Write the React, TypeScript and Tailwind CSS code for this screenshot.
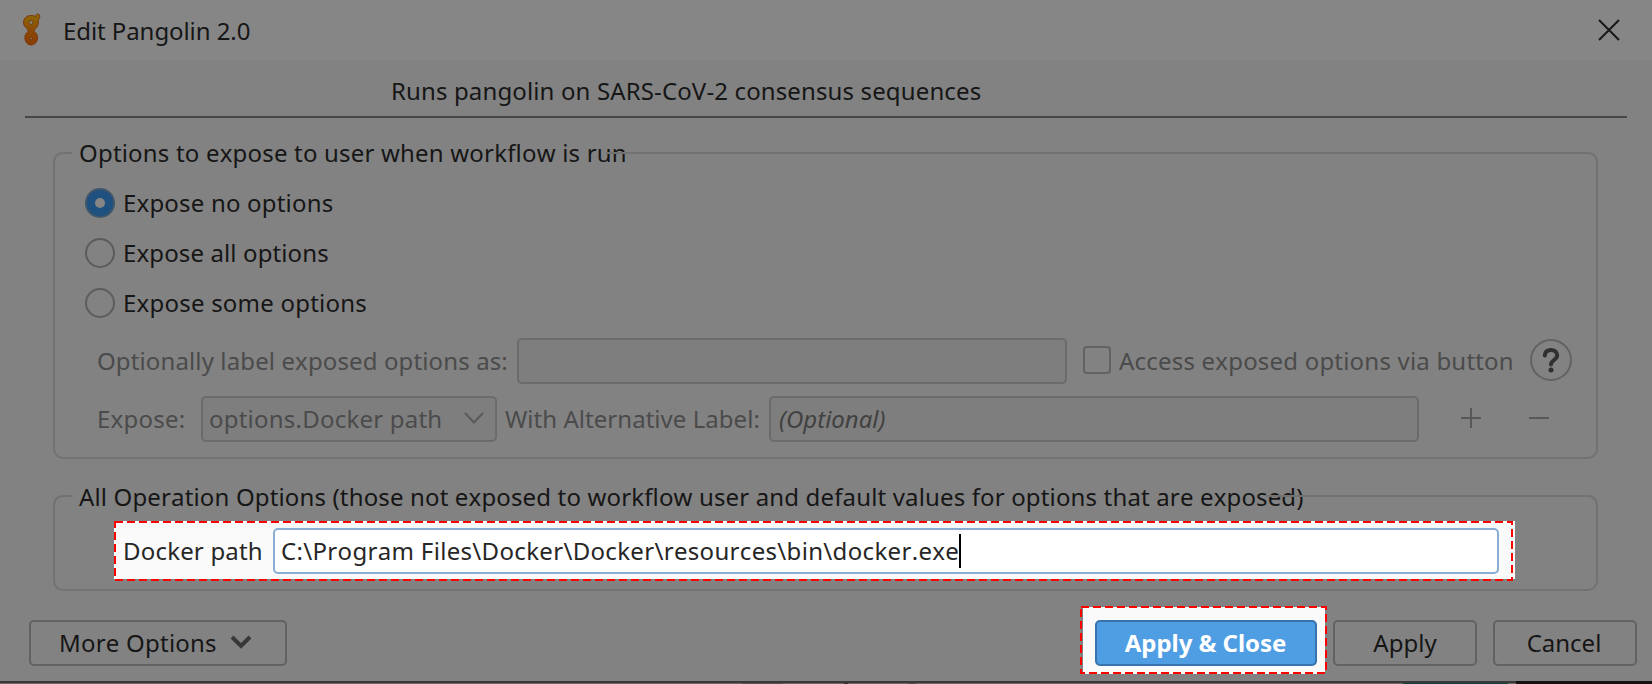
import type { ReactNode } from "react";

const fieldBase = "box-border flex h-[46px] shrink-0 items-center rounded-[5px] border-2";

function Radio({ label, checked, tracking }: { label: string; checked?: boolean; tracking: string }) {
  return (
    <label className="flex h-[50px] items-center gap-2">
      <span
        className={
          checked
            ? "flex size-[30px] items-center justify-center rounded-full border-2 border-[#3f556a] bg-[#1f5180]"
            : "flex size-[30px] items-center justify-center rounded-full border-2 border-[#5c5c5c]"
        }
      >
        {checked && <span className="size-[10px] rounded-full bg-[#868686]" />}
      </span>
      <span className={`whitespace-nowrap ${tracking}`}>{label}</span>
    </label>
  );
}

function Group({ title, className, titleClass, line, children }: { title: string; className: string; titleClass: string; line: string; children: ReactNode }) {
  return (
    <section className={`relative ml-[53px] w-[1545px] rounded-[10px] border-2 border-t-0 border-[#727272] ${className}`}>
      <span className="absolute -left-[2px] top-0 h-[12px] w-[19px] rounded-tl-[10px] border-l-2 border-t-2 border-[#727272]" />
      <h2 className={`absolute left-[24px] whitespace-nowrap leading-9 ${titleClass}`}>{title}</h2>
      <span className={`absolute -right-[2px] top-0 h-[12px] rounded-tr-[10px] border-r-2 border-t-2 border-[#727272] ${line}`} />
      {children}
    </section>
  );
}

function Dashes({ w, h, className }: { w: number; h: number; className: string }) {
  return (
    <svg className={`pointer-events-none absolute ${className}`} width={w} height={h} fill="none" stroke="#ff0000" strokeWidth="2" strokeDasharray="8 4">
      <rect x="1" y="1" width={w - 2} height={h - 2} />
    </svg>
  );
}

export default function App() {
  return (
    <main className="flex h-[684px] w-[1652px] flex-col overflow-hidden bg-[#828282] font-['Noto_Sans',sans-serif] text-[24px] leading-9 text-[#161616] [font-kerning:none] [font-variant-ligatures:none]">
      <header className="flex h-[60px] shrink-0 items-center bg-[#868686] pl-[22px] pr-[31px]">
        <svg width="20" height="34" viewBox="0 0 20 34">
          <defs>
            <linearGradient id="g" x1="0" y1="0" x2="0" y2="1">
              <stop offset="0" stopColor="#8f6a08" />
              <stop offset="0.5" stopColor="#8b4a05" />
              <stop offset="1" stopColor="#8a3c04" />
            </linearGradient>
          </defs>
          <path
            d="M9 2.500c2 0 3.500.3 5 1C13.800 1.800 14.500 1 15.800 1c1.700 0 2.200 1.500 1.900 3.200-.2 1.300-1 2-1.500 3.300.6 3.500-.3 6-2.700 8.200-1.600 1.400-1.600 2.300-.1 3.700 2.100 2 2.500 4.400 2.100 6.700C14.900 29.600 12.400 32 9.200 32s-5.600-2.400-6.200-5.600c-.4-2.700.1-4.900 2-6.900 1.500-1.400 1.400-2.500-.1-4C2.400 13.400 1.200 11.300 1.500 8.700 1.900 5 5 2.500 9 2.500Z"
            fill="url(#g)"
            stroke="#7b3a12"
            strokeWidth="1"
          />
          <circle cx="9" cy="9.500" r="2" fill="#858078" stroke="#6f4610" />
          <circle cx="9.200" cy="25.500" r="1.300" fill="#858078" stroke="#7a3204" />
        </svg>
        <h1 className="ml-[21px] mt-[2px] whitespace-nowrap tracking-[-0.08px] [font-kerning:normal]">Edit Pangolin 2.0</h1>
        <svg className="ml-auto" width="24" height="24" viewBox="0 0 24 24" stroke="#181818" strokeWidth="2">
          <path d="M2 2 22 22M22 2 2 22" />
        </svg>
      </header>
      <div className="mx-[25px] flex h-[58px] shrink-0 items-center border-b-2 border-[#464646] pl-[366px] pt-[5px]">
        <p className="whitespace-nowrap tracking-[0.13px]">Runs pangolin on SARS-CoV-2 consensus sequences</p>
      </div>

      <Group title="Options to expose to user when workflow is run" titleClass="-top-[17px] tracking-[0.19px]" className="mt-[34px] h-[307px] shrink-0" line="w-[992px]">
        <div className="pl-[30px] pt-[26px]">
          <Radio label="Expose no options" checked tracking="tracking-[0.19px]" />
          <Radio label="Expose all options" tracking="tracking-[0.12px]" />
          <Radio label="Expose some options" tracking="tracking-[0.22px]" />
        </div>
        <div className="mt-[10px] flex h-[46px] items-center pl-[42px] text-[#4b4b4b]">
          <span className="w-[420px] whitespace-nowrap tracking-[0.12px]">Optionally label exposed options as:</span>
          <span className={`${fieldBase} w-[550px] border-[#6b6b6b] bg-[#7e7e7e]`} />
          <span className="mb-[2px] ml-[16px] size-[28px] rounded-[4px] border-2 border-[#626262]" />
          <span className="ml-[8px] w-[411px] whitespace-nowrap tracking-[0.2px]">Access exposed options via button</span>
          <svg className="mb-[2px]" width="42" height="42" viewBox="0 0 42 42" fill="none">
            <circle cx="21" cy="21" r="20" stroke="#626262" strokeWidth="2" />
            <path d="M14.800 16.500c.3-3.600 2.800-5.500 6.200-5.500 3.700 0 6.200 2.200 6.200 5.500 0 4.300-6.200 4.700-6.200 9" stroke="#303030" strokeWidth="4" strokeLinecap="round" />
            <circle cx="21" cy="31" r="2.500" fill="#303030" />
          </svg>
        </div>
        <div className="mt-[12px] flex h-[46px] items-center pl-[42px] text-[#4b4b4b]">
          <span className="w-[104px] whitespace-nowrap tracking-[0.25px]">Expose:</span>
          <span className={`${fieldBase} w-[296px] border-[#6b6b6b] bg-[#7e7e7e] pl-[6px]`}>
            <span className="w-[255px] whitespace-nowrap tracking-[0.22px]">options.Docker path</span>
            <svg className="mb-[2px]" width="20" height="12" viewBox="0 0 20 12" fill="none" stroke="#5a5a5a" strokeWidth="2">
              <path d="M1 1 10 10.500 19 1" />
            </svg>
          </span>
          <span className="ml-[8px] w-[264px] whitespace-nowrap tracking-[0.04px]">With Alternative Label:</span>
          <span className={`${fieldBase} w-[650px] border-[#6b6b6b] bg-[#7e7e7e] pl-[8px] italic text-[#414141]`}>(Optional)</span>
          <svg className="mb-[2px] ml-[42px]" width="20" height="20" stroke="#585858" strokeWidth="2">
            <path d="M0 10H20M10 0V20" />
          </svg>
          <svg className="mb-[2px] ml-[48px]" width="20" height="20" stroke="#585858" strokeWidth="2">
            <path d="M0 10H20" />
          </svg>
        </div>
      </Group>

      <Group title="All Operation Options (those not exposed to workflow user and default values for options that are exposed)" titleClass="-top-[16px] tracking-[0.147px]" className="mt-[36px] h-[96px] shrink-0" line="w-[332px]">
        <div className="relative ml-[59px] mt-[26px] flex h-[58px] w-[1401px] items-center border-l-2 border-t-2 border-white bg-[#fafafa] pl-[7px] text-[#262626]">
          <span className="w-[150px] whitespace-nowrap tracking-[0.19px]">Docker path</span>
          <span className={`${fieldBase} w-[1226px] border-[#8aadd6] bg-white pl-[6px]`}>
            <span className="whitespace-nowrap tracking-[0.325px]">C:\Program Files\Docker\Docker\resources\bin\docker.exe</span>
            <span className="h-[34px] w-[2px] bg-black" />
          </span>
          <Dashes w={1399} h={60} className="-left-[2px] -top-[2px]" />
        </div>
      </Group>

      <footer className="flex h-[90px] shrink-0 items-start pl-[29px]">
        <button className={`${fieldBase} mt-[29px] w-[258px] border-[#626262] pl-[28px]`}>
          <span className="w-[171px] whitespace-nowrap text-left tracking-[0.22px]">More Options</span>
          <svg className="mb-[3px]" width="22" height="14" viewBox="0 0 22 14" fill="none" stroke="#383838" strokeWidth="4">
            <path d="M2 2 11 11 20 2" />
          </svg>
        </button>
        <div className="relative ml-[796px] mt-[16px] flex h-[67px] w-[242px] shrink-0 items-start bg-[#fafafa] pl-[12px] pt-[13px]">
          <button className={`${fieldBase} w-[222px] justify-center border-[#3873ae] bg-[#4f9ee3] pr-[1px] font-bold tracking-[-0.06px] text-white`}>Apply &amp; Close</button>
          <Dashes w={247} h={68} className="-left-[3px] -top-[1px]" />
        </div>
        <button className={`${fieldBase} ml-[8px] mt-[29px] w-[144px] justify-center border-[#626262]`}>Apply</button>
        <button className={`${fieldBase} ml-[16px] mt-[29px] w-[144px] justify-center border-[#626262] pr-[2px]`}>Cancel</button>
      </footer>
      <div className="flex h-[3px] shrink-0 border-t-2 border-[#3a3838] bg-[#6a6868]">
        <span className="ml-[742px] w-[41px] bg-[#555555]" />
        <span className="ml-[61px] w-[4px] bg-[#333333]" />
        <span className="ml-[60px] w-[8px] bg-[#505050]" />
        <span className="ml-[487px] w-[105px] bg-[#12443f]" />
        <span className="-mt-[2px] ml-[8px] h-[3px] flex-1 bg-[#131111]" />
      </div>
    </main>
  );
}
